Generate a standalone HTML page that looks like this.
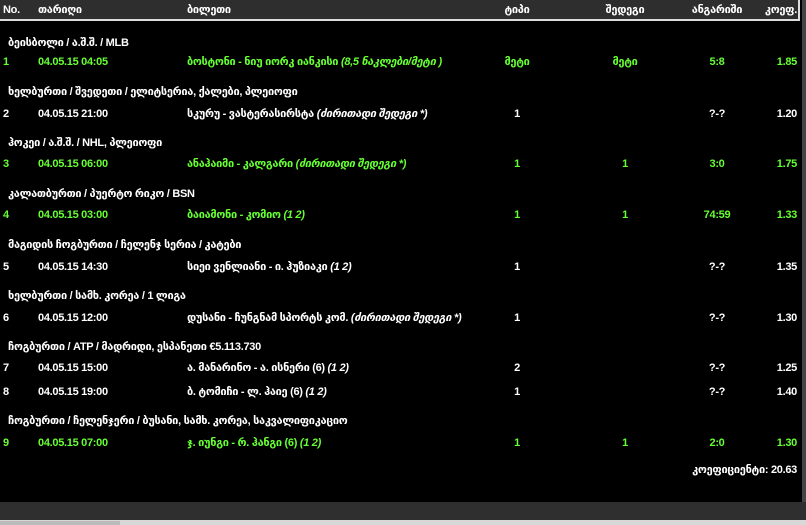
<!DOCTYPE html>
<html><head><meta charset="utf-8"><style>
body{margin:0;width:806px;height:525px;overflow:hidden;background:#000;font-family:"Liberation Sans","DejaVu Sans",sans-serif;font-size:11px;color:#fff;position:relative;font-weight:bold}
.hdr{position:absolute;left:0;top:0;width:798px;height:19px;background:#2e2e2e;border-bottom:2px solid #ddd;border-right:2px solid #ddd}
.t{position:absolute;white-space:nowrap;line-height:12px;letter-spacing:-0.3px}
.b{font-weight:bold}
.g{color:#66ff33}
.c{transform:translateX(-50%)}
.r{transform:translateX(-100%)}
i{font-style:italic}
.rs{position:absolute;left:802px;top:0;width:4px;height:502px;background:#444}
.bot{position:absolute;left:0;top:502px;width:806px;height:18px;background:#2f2f2f}
.bot2{position:absolute;left:0;top:520px;width:806px;height:5px;background:#d8d8d8}
.sb{position:absolute;left:0;top:521px;width:120px;height:4px;background:#bbb}
</style></head><body>
<div class="hdr"></div>
<div class="rs"></div>
<div class="t b" style="left:3px;top:4px">No.</div>
<div class="t b" style="left:38px;top:4px">თარიღი</div>
<div class="t b" style="left:187px;top:4px">ბილეთი</div>
<div class="t b c" style="left:517px;top:4px">ტიპი</div>
<div class="t b c" style="left:625px;top:4px">შედეგი</div>
<div class="t b c" style="left:717px;top:4px">ანგარიში</div>
<div class="t b r" style="left:797px;top:4px">კოეფ.</div>

<div class="t b" style="left:8px;top:37px">ბეისბოლი / ა.შ.შ. / MLB</div>
<div class="t g" style="left:3px;top:56px">1</div><div class="t g" style="left:38px;top:56px">04.05.15 04:05</div>
<div class="t g" style="left:187px;top:56px">ბოსტონი - ნიუ იორკ იანკისი <i>(8,5 ნაკლები/მეტი )</i></div>
<div class="t g c" style="left:517px;top:56px">მეტი</div><div class="t g c" style="left:625px;top:56px">მეტი</div><div class="t g c" style="left:717px;top:56px">5:8</div><div class="t g r" style="left:797px;top:56px">1.85</div>

<div class="t b" style="left:8px;top:86px">ხელბურთი / შვედეთი / ელიტსერია, ქალები, პლეიოფი</div>
<div class="t" style="left:3px;top:108px">2</div><div class="t" style="left:38px;top:108px">04.05.15 21:00</div>
<div class="t" style="left:187px;top:108px">სკურუ - ვასტერასირსტა <i>(ძირითადი შედეგი *)</i></div>
<div class="t c" style="left:517px;top:108px">1</div><div class="t c" style="left:717px;top:108px">?-?</div><div class="t r" style="left:797px;top:108px">1.20</div>

<div class="t b" style="left:8px;top:137px">ჰოკეი / ა.შ.შ. / NHL, პლეიოფი</div>
<div class="t g" style="left:3px;top:158px">3</div><div class="t g" style="left:38px;top:158px">04.05.15 06:00</div>
<div class="t g" style="left:187px;top:158px">ანაჰაიმი - კალგარი <i>(ძირითადი შედეგი *)</i></div>
<div class="t g c" style="left:517px;top:158px">1</div><div class="t g c" style="left:625px;top:158px">1</div><div class="t g c" style="left:717px;top:158px">3:0</div><div class="t g r" style="left:797px;top:158px">1.75</div>

<div class="t b" style="left:8px;top:188px">კალათბურთი / პუერტო რიკო / BSN</div>
<div class="t g" style="left:3px;top:209px">4</div><div class="t g" style="left:38px;top:209px">04.05.15 03:00</div>
<div class="t g" style="left:187px;top:209px">ბაიამონი - კომიო <i>(1 2)</i></div>
<div class="t g c" style="left:517px;top:209px">1</div><div class="t g c" style="left:625px;top:209px">1</div><div class="t g c" style="left:717px;top:209px">74:59</div><div class="t g r" style="left:797px;top:209px">1.33</div>

<div class="t b" style="left:8px;top:239px">მაგიდის ჩოგბურთი / ჩელენჯ სერია / კატები</div>
<div class="t" style="left:3px;top:261px">5</div><div class="t" style="left:38px;top:261px">04.05.15 14:30</div>
<div class="t" style="left:187px;top:261px">სიეი ვენლიანი - ი. ჰუზიაკი <i>(1 2)</i></div>
<div class="t c" style="left:517px;top:261px">1</div><div class="t c" style="left:717px;top:261px">?-?</div><div class="t r" style="left:797px;top:261px">1.35</div>

<div class="t b" style="left:8px;top:290px">ხელბურთი / სამხ. კორეა / 1 ლიგა</div>
<div class="t" style="left:3px;top:312px">6</div><div class="t" style="left:38px;top:312px">04.05.15 12:00</div>
<div class="t" style="left:187px;top:312px">დუსანი - ჩუნგნამ სპორტს კომ. <i>(ძირითადი შედეგი *)</i></div>
<div class="t c" style="left:517px;top:312px">1</div><div class="t c" style="left:717px;top:312px">?-?</div><div class="t r" style="left:797px;top:312px">1.30</div>

<div class="t b" style="left:8px;top:341px">ჩოგბურთი / ATP / მადრიდი, ესპანეთი €5.113.730</div>
<div class="t" style="left:3px;top:362px">7</div><div class="t" style="left:38px;top:362px">04.05.15 15:00</div>
<div class="t" style="left:187px;top:362px">ა. მანარინო - ა. ისნერი (6) <i>(1 2)</i></div>
<div class="t c" style="left:517px;top:362px">2</div><div class="t c" style="left:717px;top:362px">?-?</div><div class="t r" style="left:797px;top:362px">1.25</div>
<div class="t" style="left:3px;top:386px">8</div><div class="t" style="left:38px;top:386px">04.05.15 19:00</div>
<div class="t" style="left:187px;top:386px">ბ. ტომიჩი - ლ. ჰაიე (6) <i>(1 2)</i></div>
<div class="t c" style="left:517px;top:386px">1</div><div class="t c" style="left:717px;top:386px">?-?</div><div class="t r" style="left:797px;top:386px">1.40</div>

<div class="t b" style="left:8px;top:415px">ჩოგბურთი / ჩელენჯერი / ბუსანი, სამხ. კორეა, საკვალიფიკაციო</div>
<div class="t g" style="left:3px;top:437px">9</div><div class="t g" style="left:38px;top:437px">04.05.15 07:00</div>
<div class="t g" style="left:187px;top:437px">ჯ. იუნგი - რ. ჰანგი (6) <i>(1 2)</i></div>
<div class="t g c" style="left:517px;top:437px">1</div><div class="t g c" style="left:625px;top:437px">1</div><div class="t g c" style="left:717px;top:437px">2:0</div><div class="t g r" style="left:797px;top:437px">1.30</div>

<div class="t r" style="left:797px;top:464px">კოეფიციენტი: 20.63</div>
<div class="bot"></div><div class="bot2"></div><div class="sb"></div>
</body></html>
